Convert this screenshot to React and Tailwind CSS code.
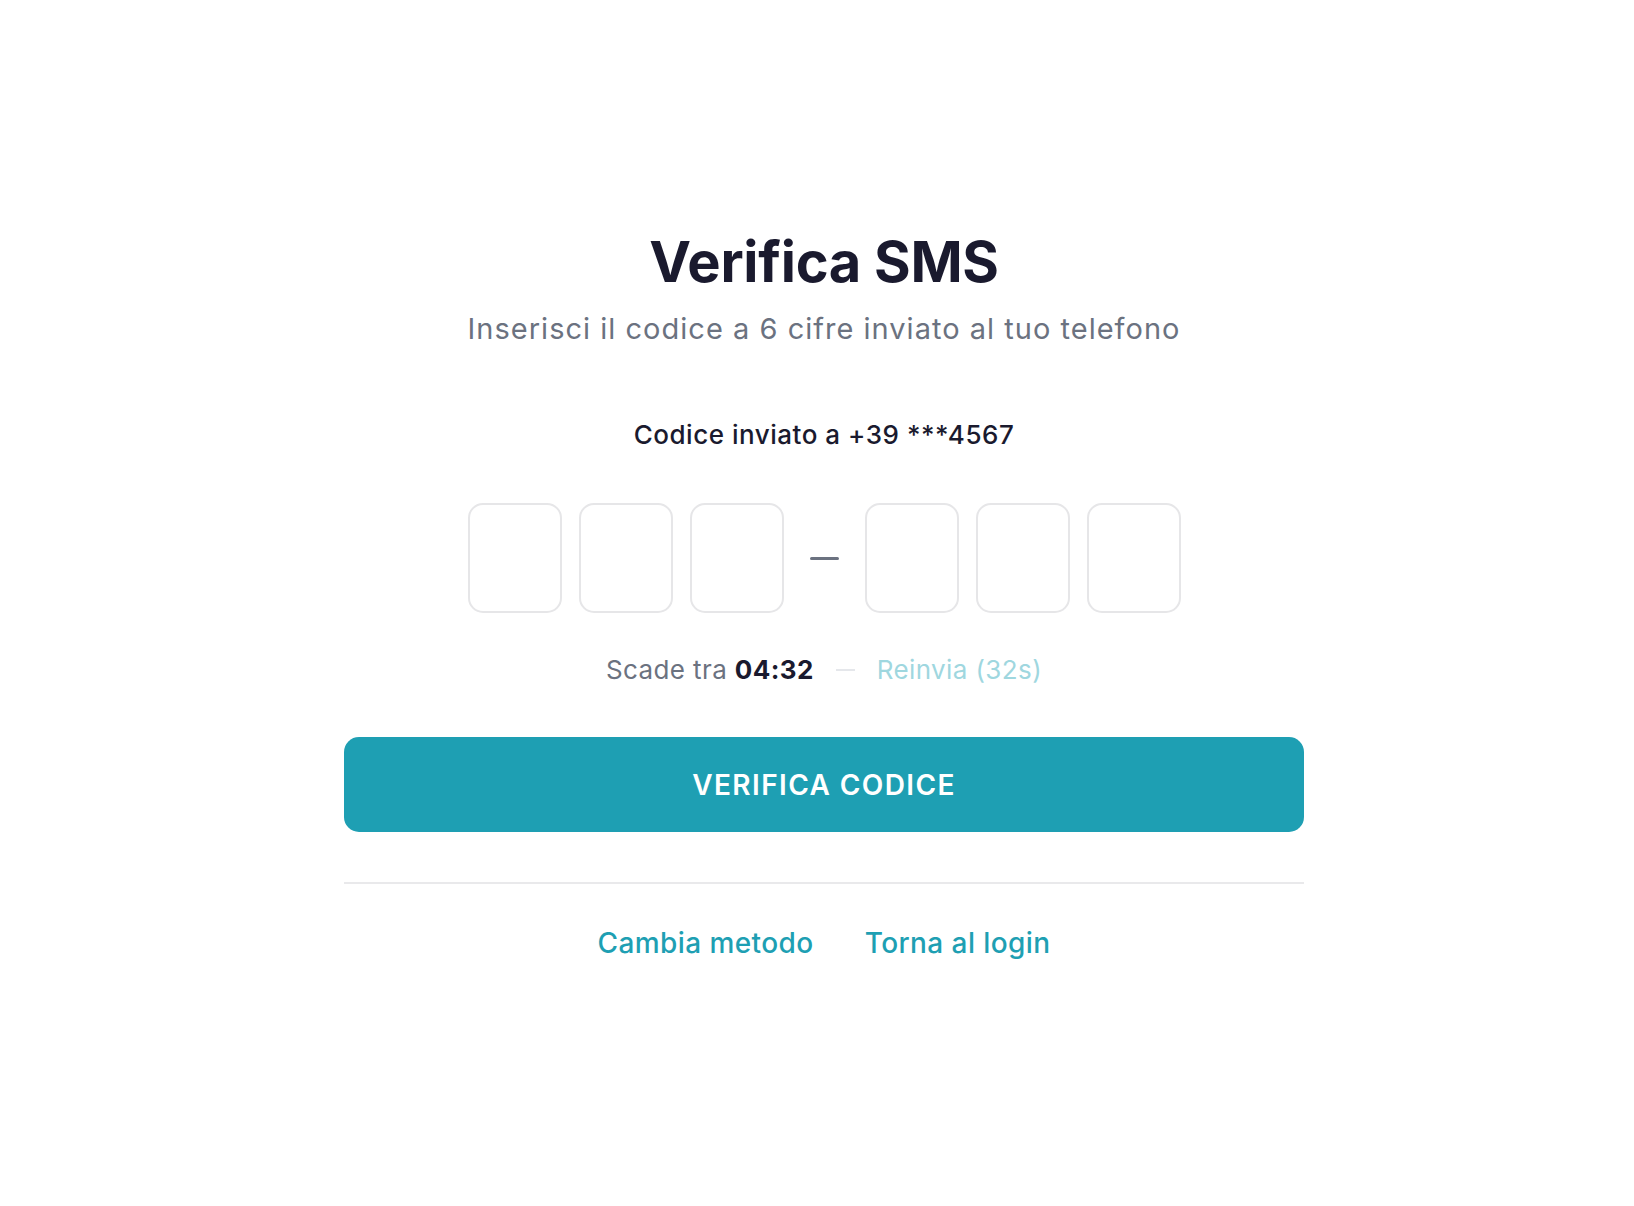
export default function App() {
  const digits = [0, 1, 2];

  return (
    <div className="min-h-screen bg-white pl-[14px] font-['Inter',sans-serif] antialiased">
      <main className="mx-auto flex w-[960px] flex-col items-center pt-[234px]">
        <h1 className="text-[56px] font-bold leading-none tracking-[-0.005em] text-[#1a1a2e]">
          Verifica SMS
        </h1>
        <p className="mt-[24px] text-[29px] leading-none tracking-[0.035em] text-[#6b7280]">
          Inserisci il codice a 6 cifre inviato al tuo telefono
        </p>

        <p className="mt-[79px] text-[26px] font-medium leading-none tracking-[0.02em] text-[#1a1a2e]">
          Codice inviato a +39 ***4567
        </p>

        {/* code inputs, split 3 + 3 */}
        <div className="mt-[55px] flex items-center gap-[17px]">
          {digits.map((i) => (
            <input
              key={`a${i}`}
              maxLength={1}
              inputMode="numeric"
              className="h-[110px] w-[94px] rounded-[15px] border-2 border-[#e6e6e8] bg-white text-center text-[40px] font-semibold text-[#1a1a2e] outline-none"
            />
          ))}
          <span className="mx-[9px] h-[3px] w-[29px] rounded-full bg-[#6b7280]" />
          {digits.map((i) => (
            <input
              key={`b${i}`}
              maxLength={1}
              inputMode="numeric"
              className="h-[110px] w-[94px] rounded-[15px] border-2 border-[#e6e6e8] bg-white text-center text-[40px] font-semibold text-[#1a1a2e] outline-none"
            />
          ))}
        </div>

        <div className="mt-[44px] flex items-center text-[26px] leading-none tracking-[0.015em]">
          <span className="text-[#6b7280]">
            Scade tra <strong className="font-bold text-[#1a1a2e]">04:32</strong>
          </span>
          <span className="mx-[22px] h-[2px] w-[19px] bg-[#e5e7eb]" />
          <button className="tracking-[0.015em] text-[#9fd7df]" disabled>
            Reinvia (32s)
          </button>
        </div>

        <button className="mt-[54px] h-[95px] w-full rounded-[15px] bg-[#1e9fb3] text-[28px] font-semibold uppercase tracking-[0.05em] text-white">
          Verifica codice
        </button>

        <div className="mt-[50px] w-full border-t-2 border-[#e9e9eb]" />

        <div className="mt-[45px] flex items-center gap-[51px] text-[28px] font-medium leading-none tracking-[0.015em] text-[#1e9fb3]">
          <a href="#">Cambia metodo</a>
          <a href="#">Torna al login</a>
        </div>
      </main>
    </div>
  );
}
